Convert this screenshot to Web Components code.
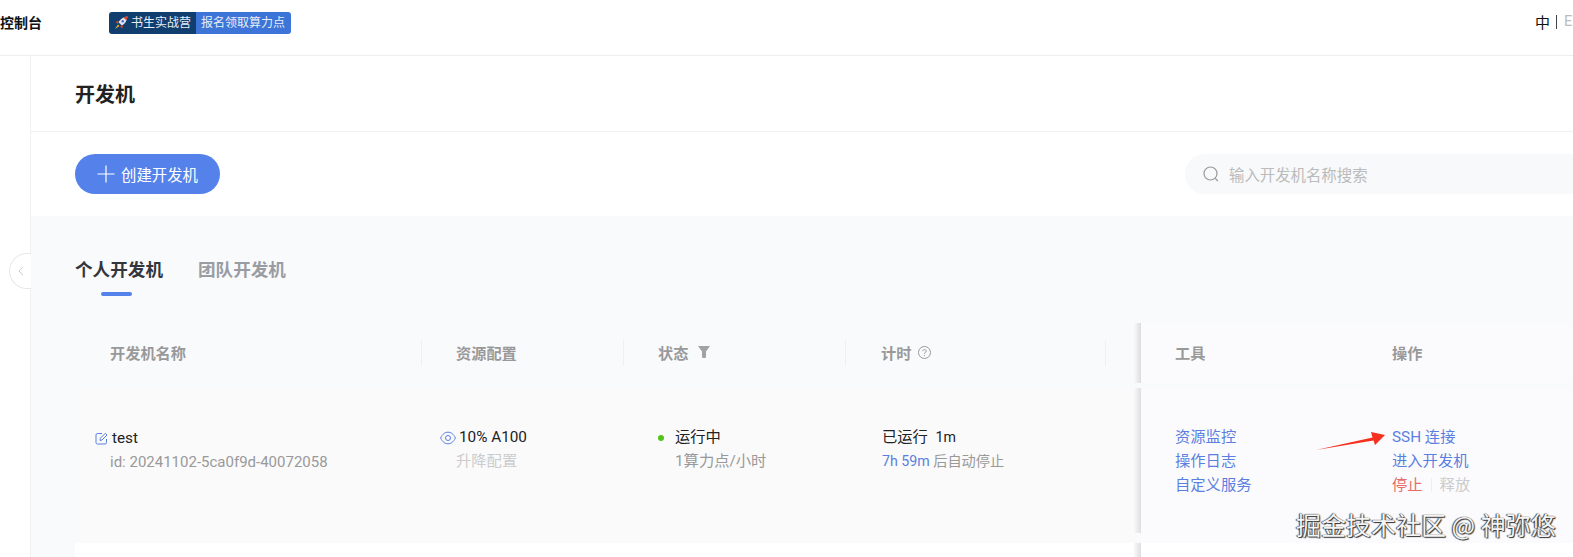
<!DOCTYPE html>
<html lang="zh">
<head>
<meta charset="utf-8">
<title>开发机</title>
<style>
	html, body { margin: 0; height: 100%; background: #fff; overflow: hidden; }
	body { font-family: "Roboto", "Noto Sans CJK SC", sans-serif; font-size: 15.3px; color: #222; }
</style>
</head>
<body>
<console-page></console-page>

<script>
customElements.define('promo-badge',
	class extends HTMLElement {
		constructor() {
			super();
			this.attachShadow({mode: 'open'}).innerHTML = `<style>
				:host { display: inline-flex; height: 22px; line-height: 22px; font-size: 12px; color: #e8eef8; border-radius: 3px; overflow: hidden; }
				.left { display: flex; align-items: center; gap: 3px; width: 87px; box-sizing: border-box; padding-left: 5px; background: #0f3e6f; }
				.right { width: 95px; box-sizing: border-box; padding-left: 5px; background: #3d74d7; white-space: nowrap; }
				svg { width: 14px; height: 14px; flex: none; }
			</style>
			<div class="left">
				<svg viewBox="0 0 14 14"><path d="M13.500 .5C9.500 .8 6.300 2.800 4.500 6.200L7.800 9.500C11.200 7.700 13.200 4.500 13.500 .5Z" fill="#dfe4ea"/><path d="M13.500 .5C12 .6 10.700 1 9.500 1.600L12.400 4.500C13 3.300 13.400 2 13.500 .5Z" fill="#d8412f"/><circle cx="8.700" cy="5.300" r="1.200" fill="#3d74d7"/><path d="M5 4.800 1.500 5.800 3.500 8ZM9.200 9 8.200 12.500 6 10.500Z" fill="#d8412f"/><path d="M4 8.500 1 13 5.500 10Z" fill="#f7b32b"/></svg>
				<span>书生实战营</span>
			</div>
			<div class="right">报名领取算力点</div>`;
		}
	}
);

customElements.define('app-header',
	class extends HTMLElement {
		constructor() {
			super();
			this.attachShadow({mode: 'open'}).innerHTML = `<style>
				:host { display: flex; flex: none; align-items: center; height: 46px; padding-bottom: 9px; border-bottom: 1px solid #eeeeee; }
				.brand { width: 109px; padding-bottom: 3px; font-size: 14px; font-weight: 700; color: #111; }
				.lang { display: flex; align-items: center; margin-left: auto; width: 38px; padding-bottom: 3px; font-size: 15px; white-space: nowrap; color: #111; }
				.lang i { width: 1px; height: 14px; background: #444; margin: 0 7px 0 6px; }
				.lang span { color: #bbb; font-size: 14.500px; }
			</style>
			<div class="brand">控制台</div>
			<slot></slot>
			<div class="lang">中<i></i><span>E</span></div>`;
		}
	}
);

customElements.define('page-title',
	class extends HTMLElement {
		constructor() {
			super();
			this.attachShadow({mode: 'open'}).innerHTML = `<style>
				:host { display: flex; align-items: center; height: 75px; padding-left: 44px; border-bottom: 1px solid #f0f0f0; font-size: 20px; font-weight: 700; color: #222; }
			</style><slot></slot>`;
		}
	}
);

customElements.define('create-button',
	class extends HTMLElement {
		constructor() {
			super();
			this.attachShadow({mode: 'open'}).innerHTML = `<style>
				:host { display: inline-flex; align-items: center; gap: 6px; width: 145px; height: 40px; box-sizing: border-box; padding-left: 22px; border-radius: 20px; background: #5582ea; color: #fff; font-size: 15.400px; }
				svg { width: 18px; height: 18px; }
			</style>
			<svg viewBox="0 0 18 18" fill="none" stroke="#fff" stroke-width="1.200"><path d="M9 0.500V17.500M0.500 9H17.500"/></svg>
			<slot></slot>`;
		}
	}
);

customElements.define('search-box',
	class extends HTMLElement {
		constructor() {
			super();
			this.attachShadow({mode: 'open'}).innerHTML = `<style>
				:host { display: flex; align-items: center; gap: 10px; width: 440px; height: 40px; box-sizing: border-box; padding-left: 18px; border-radius: 20px; background: #f7f9fa; color: #bbb; font-size: 15.400px; }
				svg { width: 16px; height: 16px; flex: none; }
			</style>
			<svg viewBox="0 0 16 16" fill="none" stroke="#999" stroke-width="1.200"><circle cx="7.500" cy="7.500" r="6.500"/><path d="M12.300 12.300 14.800 15"/></svg>
			<slot></slot>`;
		}
	}
);

customElements.define('dev-tabs',
	class extends HTMLElement {
		constructor() {
			super();
			this.attachShadow({mode: 'open'}).innerHTML = `<style>
				:host { display: flex; gap: 35px; height: 107px; padding: 42px 0 0 44px; box-sizing: border-box; font-size: 17.600px; font-weight: 700; color: #999da3; }
				div { position: relative; line-height: 24px; }
				.on { color: #33363b; }
				.on::after { content: ""; position: absolute; left: 26px; top: 34px; width: 31px; height: 4px; border-radius: 2px; background: #5582ea; }
			</style>
			<div class="on">个人开发机</div>
			<div>团队开发机</div>`;
		}
	}
);

const devColumns = "346px 202px 222px 260px 29px 7px 216px 1fr";

customElements.define('dev-table-head',
	class extends HTMLElement {
		constructor() {
			super();
			this.attachShadow({mode: 'open'}).innerHTML = `<style>
				:host { display: grid; grid-template-columns: ${devColumns}; height: 60px; margin-left: 44px; font-size: 15.200px; font-weight: 700; color: #999; }
				.cell { display: flex; align-items: center; gap: 7px; padding: 0 0 2px 35px; position: relative; }
				.sep::after { content: ""; position: absolute; right: -1px; top: 17px; height: 26px; width: 1px; background: #eef0f2; }
				.fix { background: #fbfbfd; }
				.strip { background: linear-gradient(90deg, #f8f9fb, #dcdcdf); }
				svg { flex: none; }
				.funnel { margin-left: 3px; }
			</style>
			<div class="cell sep">开发机名称</div>
			<div class="cell sep">资源配置</div>
			<div class="cell sep">状态
				<svg class="funnel" width="12" height="12" viewBox="0 0 12 12"><path d="M.5 0H11.500Q12 0 11.700 .6L8 5.500V11Q8 12 7 12H5Q4 12 4 11V5.500L.3 .6Q0 0 .5 0Z" fill="#a3a3a3"/></svg></div>
			<div class="cell sep" style="padding-left:36px">计时
				<svg width="13" height="13" viewBox="0 0 13 13" fill="none" stroke="#999"><circle cx="6.500" cy="6.500" r="6"/><path d="M4.800 5.200C4.800 3 8.200 3 8.200 5.200 8.200 6.500 6.500 6.400 6.500 8M6.500 9.200V10.200"/></svg></div>
			<div></div>
			<div class="strip"></div>
			<div class="cell fix" style="padding-left:34px">工具</div>
			<div class="cell fix">操作</div>`;
		}
	}
);

customElements.define('dev-table-row',
	class extends HTMLElement {
		constructor() {
			super();
			this.attachShadow({mode: 'open'}).innerHTML = `<style>
				:host { display: grid; grid-template-columns: ${devColumns}; height: 155px; margin: 5px 0 0 44px; background: #fafafb; line-height: 24px; white-space: nowrap; }
				.cell { padding: 37px 0 0 35px; position: relative; }
				.sub { color: #999; }
				.mute { color: #ccc; }
				.link { color: #5b7fe0; }
				.stop { color: #e86a6a; }
				.strip { height: 145px; background: linear-gradient(90deg, #f8f8fa, #dfdfe2); }
				.fix { background: #fbfbfd; }
				.icon { position: absolute; }
				.dot { position: absolute; left: 35px; top: 47px; width: 6px; height: 6px; border-radius: 50%; background: #52c41a; }
				.ind { padding-left: 17px; }
				.small { font-size: 14.200px; }
				.gap { display: inline-block; width: 1px; height: 14px; background: #eee; margin: 0 8px; vertical-align: -2px; }
			</style>
			<div class="cell" style="padding-top:38px">
				<svg class="icon" style="left:20px;top:44px" width="13" height="13" viewBox="0 0 13 13" fill="none" stroke="#5b7fe0"><path d="M7 1.500H2.500A1.500 1.500 0 0 0 1 3V10.500A1.500 1.500 0 0 0 2.500 12H10A1.500 1.500 0 0 0 11.500 10.500V7"/><path d="M5 8.500 5.300 6.300 10.300 1.300 12 3 7 8Z"/></svg>
				<div style="margin-left:2px">test</div>
				<div class="sub" style="font-size:15px">id: 20241102-5ca0f9d-40072058</div>
			</div>
			<div class="cell">
				<svg class="icon" style="left:19px;top:43px" width="16" height="14" viewBox="0 0 16 14" fill="none" stroke="#5b7fe0"><path d="M.6 7C2.500 3 5 1.200 8 1.200S13.500 3 15.400 7C13.500 11 11 12.800 8 12.800S2.500 11 .6 7Z"/><circle cx="8" cy="7" r="2.500"/></svg>
				<div style="margin-left:3px">10% A100</div>
				<div class="mute">升降配置</div>
			</div>
			<div class="cell">
				<div class="dot"></div>
				<div class="ind">运行中</div>
				<div class="sub ind">1算力点/小时</div>
			</div>
			<div class="cell" style="padding-left:37px">
				<div>已运行&nbsp;&nbsp;<span class="small">1m</span></div>
				<div class="sub small"><span class="link">7h 59m</span> 后自动停止</div>
			</div>
			<div></div>
			<div class="strip"></div>
			<div class="cell fix link" style="padding-left:34px">
				<div>资源监控</div>
				<div>操作日志</div>
				<div>自定义服务</div>
			</div>
			<div class="cell fix link">
				<div>SSH 连接</div>
				<div>进入开发机</div>
				<div><span class="stop">停止</span><span class="gap"></span><span class="mute">释放</span></div>
			</div>`;
		}
	}
);

customElements.define('console-page',
	class extends HTMLElement {
		constructor() {
			super();
			this.attachShadow({mode: 'open'}).innerHTML = `<style>
				:host { display: flex; flex-direction: column; height: 557px; overflow: hidden; position: relative; }
				.body { display: flex; flex: 1; min-height: 0; }
				.aside { width: 30px; flex: none; border-right: 1px solid #f0f0f0; }
				.main { flex: 1; min-width: 0; }
				.toolbar { display: flex; justify-content: space-between; align-items: center; height: 84px; padding: 0 0 0 44px; }
				.toolbar search-box { margin-right: -52px; }
				.panel { height: 400px; background: #f9fafc; overflow: hidden; }
				.next { height: 40px; margin-left: 44px; background: #fff; display: grid; grid-template-columns: ${devColumns}; }
				.next i { grid-column: 6; background: linear-gradient(90deg, #f8f8fa, #dfdfe2); }
				.toggle { position: absolute; left: 9px; top: 253px; width: 22px; height: 36px; box-sizing: border-box; border: 1px solid #e8e8e8; border-right: 0; border-radius: 18px 0 0 18px; background: #fff; display: flex; align-items: center; justify-content: center; }
				.arrow { position: absolute; left: 1312px; top: 428px; }
				.mark { position: absolute; left: 1296px; top: 508px; font-size: 25px; line-height: 32px; white-space: nowrap; color: #f4f4f4; text-shadow: 0 0 1px #222, 1px 1px 1px #333, -1px 0 1px #555; font-family: "Noto Sans CJK SC", sans-serif; }
			</style>
			<app-header><promo-badge></promo-badge></app-header>
			<div class="body">
				<div class="aside"></div>
				<div class="main">
					<page-title>开发机</page-title>
					<div class="toolbar">
						<create-button>创建开发机</create-button>
						<search-box>输入开发机名称搜索</search-box>
					</div>
					<div class="panel">
						<dev-tabs></dev-tabs>
						<dev-table-head></dev-table-head>
						<dev-table-row></dev-table-row>
						<div class="next"><i></i></div>
					</div>
				</div>
			</div>
			<div class="toggle"><svg width="6" height="10" viewBox="0 0 6 10" fill="none" stroke="#ccc"><path d="M5 .8 1 5 5 9.200"/></svg></div>
			<svg class="arrow" width="74" height="26" viewBox="0 0 74 26"><path d="M4 22 60.500 9.500 59 4 73 7 63 17 61.500 12.500Z" fill="#f5301e"/></svg>
			<div class="mark">掘金技术社区 @ 神弥悠</div>`;
		}
	}
);
</script>
</body>
</html>
